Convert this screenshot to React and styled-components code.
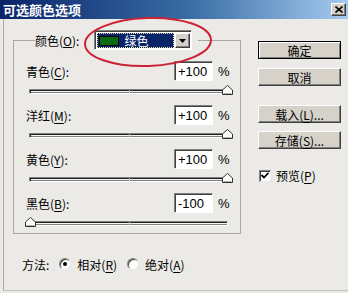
import React from "react";
import styled, { createGlobalStyle } from "styled-components";

const GlobalStyle = createGlobalStyle`
  html, body { margin: 0; padding: 0; background: #ebeae6; }
  body {
    font-family: "Liberation Sans", "Noto Sans CJK SC", sans-serif;
    font-size: 12px;
    color: #000;
  }
`;

const Window = styled.div`
  position: relative;
  width: 348px;
  height: 293px;
  background: #ebeae6;
  display: flex;
  flex-direction: column;
  overflow: hidden;
`;

const TitleBar = styled.div`
  height: 19px;
  flex: none;
  display: flex;
  align-items: center;
  justify-content: space-between;
  padding: 0 2px 0 3px;
  background: linear-gradient(to right, #0a246a 0%, #3a6ea5 55%, #a6caf0 100%);
`;

const TitleText = styled.span`
  color: #fff;
  font-family: "Noto Sans CJK SC", sans-serif;
  font-weight: 700;
  font-size: 13px;
  line-height: 19px;
  letter-spacing: 0;
`;

const CloseButton = styled.div`
  width: 15px;
  height: 13px;
  box-sizing: border-box;
  background: #d4d0c8;
  border: 1px solid;
  border-color: #fff #404040 #404040 #fff;
  box-shadow: inset -1px -1px 0 #808080;
  display: flex;
  align-items: center;
  justify-content: center;
`;

const Client = styled.div`
  flex: 1;
  display: flex;
  gap: 17px;
  margin: 0 0 2px 3px;
  padding: 11px 7px 0 9px;
  border-left: 1px solid #aeaca6;
  border-bottom: 1px solid #c4c2bc;
`;

const LeftCol = styled.div`
  width: 228px;
  display: flex;
  flex-direction: column;
`;

const GroupBox = styled.fieldset`
  margin: 0;
  min-width: 0;
  box-sizing: border-box;
  width: 228px;
  padding: 11px 7px 7px 12px;
  border: 1px solid #a9a7a1;
  display: flex;
  flex-direction: column;
  gap: 11px;
`;

const Legend = styled.legend`
  margin-left: 9px;
  padding: 0 6px 0 0;
  height: 20px;
`;

const LegendInner = styled.span`
  display: inline-flex;
  align-items: center;
  height: 20px;
  gap: 15px;
  font-family: "Noto Sans CJK SC", sans-serif;
`;

const Select = styled.div`
  width: 98px;
  height: 20px;
  box-sizing: border-box;
  display: flex;
  padding: 1px;
  background: #fff;
  border: 1px solid;
  border-color: #808080 #fff #fff #808080;
  box-shadow: inset 1px 1px 0 #404040;
`;

const SelectValue = styled.div`
  flex: 1;
  display: flex;
  align-items: center;
  gap: 5px;
  padding-left: 2px;
  margin: 1px 1px 0 1px;
  background: #0a246a;
  outline: 1px dotted #e8e0a0;
  outline-offset: -1px;
  color: #fff;
  font-family: "Noto Sans CJK SC", sans-serif;
  font-size: 12px;
`;

const Swatch = styled.span`
  width: 20px;
  height: 10px;
  box-sizing: border-box;
  background: ${(p) => p.$color};
  border: 1px solid #000;
`;

const ArrowButton = styled.div`
  width: 15px;
  margin: 1px 0 0;
  box-sizing: border-box;
  background: #d4d0c8;
  border: 1px solid;
  border-color: #fff #404040 #404040 #fff;
  box-shadow: inset -1px -1px 0 #808080;
  display: flex;
  align-items: center;
  justify-content: center;
`;

const Row = styled.div`
  display: flex;
  flex-direction: column;
`;

const RowHeader = styled.div`
  display: flex;
  align-items: center;
  height: 20px;
`;

const Label = styled.span`
  flex: 1;
  font-family: "Noto Sans CJK SC", sans-serif;
  font-size: 12px;
  u { text-underline-offset: 2px; }
`;

const NumBox = styled.div`
  width: 39px;
  height: 20px;
  box-sizing: border-box;
  background: #fff;
  border: 1px solid;
  border-color: #808080 #fff #fff #808080;
  box-shadow: inset 1px 1px 0 #404040;
  padding: 2px 0 0 3px;
  font-family: "Liberation Sans", sans-serif;
  font-size: 13px;
  line-height: 16px;
`;

const Pct = styled.span`
  width: 15px;
  margin-left: 5px;
  font-family: "Liberation Sans", sans-serif;
  font-size: 13px;
`;

const Track = styled.div`
  position: relative;
  margin: 8px 5px 0 3px;
  height: 5px;
  box-sizing: border-box;
  background: #f4f4f4;
  border: 1px solid;
  border-color: #808080 #fff #fff #808080;
  box-shadow: inset 1px 1px 0 #202020, inset 0 -1px 0 #808080;
`;

const CenterTick = styled.span`
  position: absolute;
  left: 50%;
  top: 0;
  width: 1px;
  height: 3px;
  background: #c0c0c0;
`;

const Thumb = styled.svg`
  position: absolute;
  bottom: -2px;
  margin-left: -5px;
`;

const MethodRow = styled.div`
  display: flex;
  align-items: center;
  margin-top: 22px;
  padding-left: 9px;
  height: 16px;
  font-family: "Noto Sans CJK SC", sans-serif;
  font-size: 12px;
  u { text-underline-offset: 2px; }
`;

const Option = styled.label`
  display: flex;
  align-items: center;
  gap: 6px;
  margin-left: ${(p) => p.$gap}px;
`;

const Radio = styled.span`
  width: 12px;
  height: 12px;
  box-sizing: border-box;
  border-radius: 50%;
  background: #fff;
  border: 1px solid;
  border-color: #808080 #e8e8e8 #e8e8e8 #808080;
  box-shadow: inset 1px 1px 0 #404040;
  display: flex;
  align-items: center;
  justify-content: center;
  &::after {
    content: "";
    width: 4px;
    height: 4px;
    border-radius: 50%;
    background: ${(p) => (p.$checked ? "#000" : "transparent")};
  }
`;

const RightCol = styled.div`
  width: 84px;
  padding-top: 11px;
  display: flex;
  flex-direction: column;
`;

const Button = styled.div`
  height: 18px;
  box-sizing: border-box;
  margin-top: ${(p) => p.$top}px;
  background: #d6d2ca;
  border: 1px solid;
  border-color: ${(p) => (p.$default ? "#000" : "#fff #404040 #404040 #fff")};
  box-shadow: ${(p) =>
    p.$default
      ? "inset 1px 1px 0 #fff, inset -1px -1px 0 #808080"
      : "inset -1px -1px 0 #808080"};
  display: flex;
  align-items: center;
  justify-content: center;
  font-family: "Noto Sans CJK SC", sans-serif;
  font-size: 12px;
  u { text-underline-offset: 2px; }
`;

const CheckRow = styled.label`
  display: flex;
  align-items: center;
  gap: 5px;
  margin: 18px 0 0 1px;
  font-family: "Noto Sans CJK SC", sans-serif;
  font-size: 12px;
  u { text-underline-offset: 2px; }
`;

const CheckBox = styled.span`
  width: 12px;
  height: 12px;
  box-sizing: border-box;
  background: #fff;
  border: 1px solid;
  border-color: #808080 #e8e8e8 #e8e8e8 #808080;
  box-shadow: inset 1px 1px 0 #404040;
  display: flex;
  align-items: center;
  justify-content: center;
`;

const Annotation = styled.svg`
  position: absolute;
  left: 80px;
  top: 16px;
  pointer-events: none;
`;

const rows = [
  { name: "青色", key: "C", value: 100 },
  { name: "洋红", key: "M", value: 100 },
  { name: "黄色", key: "Y", value: 100 },
  { name: "黑色", key: "B", value: -100 },
];

function Slider({ value }) {
  const pct = ((value + 100) / 200) * 100;
  return (
    <Track>
      <CenterTick />
      <Thumb width="11" height="10" viewBox="0 0 11 10" style={{ left: `${pct}%` }}>
        <path d="M5.5 0.5 L10.5 5 L10.5 9.5 L0.5 9.5 L0.5 5 Z" fill="#fff" stroke="#303030" />
        <path d="M1.5 8.5 L9.5 8.5" stroke="#b0b0b0" />
      </Thumb>
    </Track>
  );
}

export default function App() {
  return (
    <>
      <GlobalStyle />
      <Window>
        <TitleBar>
          <TitleText>可选颜色选项</TitleText>
          <CloseButton>
            <svg width="8" height="7" viewBox="0 0 8 7">
              <path d="M0.5 0.5 L7.5 6.5 M7.5 0.5 L0.5 6.5" stroke="#000" strokeWidth="1.6" />
            </svg>
          </CloseButton>
        </TitleBar>
        <Client>
          <LeftCol>
            <GroupBox>
              <Legend>
                <LegendInner>
                  <span>
                    颜色(<u>O</u>):
                  </span>
                  <Select>
                    <SelectValue>
                      <Swatch $color="#0b6a12" />
                      <span>绿色</span>
                    </SelectValue>
                    <ArrowButton>
                      <svg width="7" height="4" viewBox="0 0 7 4">
                        <path d="M0 0 L7 0 L3.5 4 Z" fill="#000" />
                      </svg>
                    </ArrowButton>
                  </Select>
                </LegendInner>
              </Legend>
              {rows.map((r) => (
                <Row key={r.key}>
                  <RowHeader>
                    <Label>
                      {r.name}(<u>{r.key}</u>):
                    </Label>
                    <NumBox>{r.value > 0 ? `+${r.value}` : r.value}</NumBox>
                    <Pct>%</Pct>
                  </RowHeader>
                  <Slider value={r.value} />
                </Row>
              ))}
            </GroupBox>
            <MethodRow>
              <span>方法:</span>
              <Option $gap={10}>
                <Radio $checked />
                <span>
                  相对(<u>R</u>)
                </span>
              </Option>
              <Option $gap={10}>
                <Radio />
                <span>
                  绝对(<u>A</u>)
                </span>
              </Option>
            </MethodRow>
          </LeftCol>
          <RightCol>
            <Button $default $top={0}>确定</Button>
            <Button $top={9}>取消</Button>
            <Button $top={19}>
              载入(<u>L</u>)...
            </Button>
            <Button $top={8}>
              存储(<u>S</u>)...
            </Button>
            <CheckRow>
              <CheckBox>
                <svg width="8" height="7" viewBox="0 0 8 7">
                  <path d="M0.5 3 L3 5.5 L7.5 0.8" fill="none" stroke="#000" strokeWidth="1.8" />
                </svg>
              </CheckBox>
              <span>
                预览(<u>P</u>)
              </span>
            </CheckRow>
          </RightCol>
        </Client>
        <Annotation width="136" height="54" viewBox="0 0 136 54">
          <ellipse cx="68" cy="26" rx="63" ry="24" fill="none" stroke="#cc2233" strokeWidth="2" transform="rotate(-2 68 26)" />
        </Annotation>
      </Window>
    </>
  );
}
